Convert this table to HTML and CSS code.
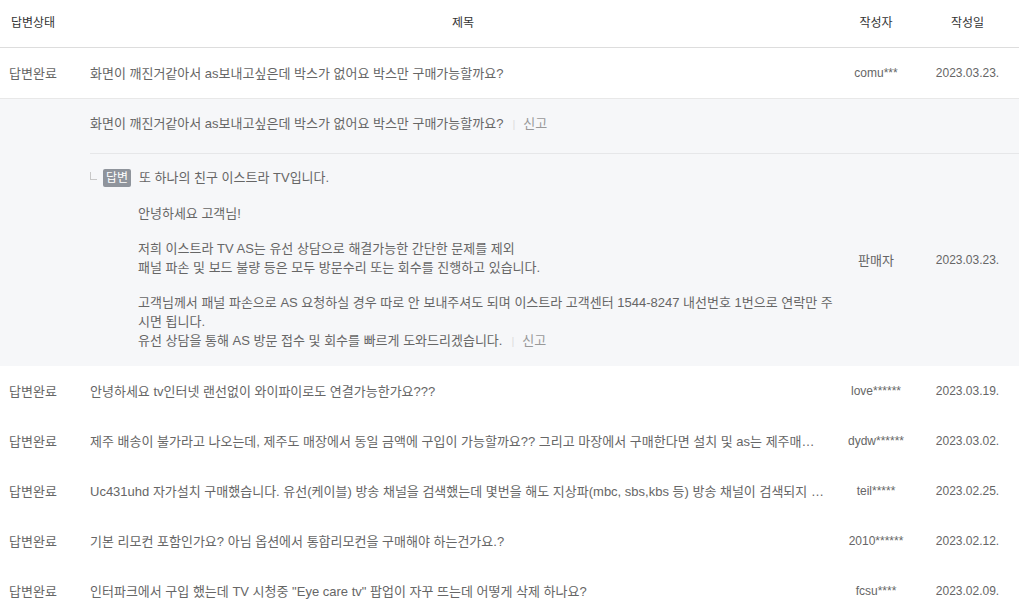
FILE: index.html
```html
<!DOCTYPE html>
<html lang="ko">
<head>
    <meta charset="UTF-8">
    <meta name="viewport" content="width=device-width, initial-scale=1.0">
    <title>상품 Q&amp;A</title>
    <link rel="stylesheet" href="styles.css">
</head>
<body>

<div class="board">
    <!-- 헤더 -->
    <div class="row head">
        <div class="cell">답변상태</div>
        <div class="cell title-head">제목</div>
        <div class="cell">작성자</div>
        <div class="cell">작성일</div>
    </div>

    <!-- 펼쳐진 글 -->
    <div class="row item open">
        <div class="cell">답변완료</div>
        <div class="cell title">화면이 깨진거같아서 as보내고싶은데 박스가 없어요 박스만 구매가능할까요?</div>
        <div class="cell en">comu***</div>
        <div class="cell en">2023.03.23.</div>
    </div>
    <div class="detail">
        <div class="question">
            화면이 깨진거같아서 as보내고싶은데 박스가 없어요 박스만 구매가능할까요?<span class="bar">|</span><span class="report">신고</span>
        </div>
        <div class="row answer-row">
            <div class="cell"></div>
            <div class="cell answer">
                <div class="answer-title">
                    <span class="corner"></span><span class="badge">답변</span>또 하나의 친구 이스트라 TV입니다.
                </div>
                <div class="answer-body">
                    <p>안녕하세요 고객님!</p>
                    <p>저희 이스트라 TV AS는 유선 상담으로 해결가능한 간단한 문제를 제외<br>패널 파손 및 보드 불량 등은 모두 방문수리 또는 회수를 진행하고 있습니다.</p>
                    <p>고객님께서 패널 파손으로 AS 요청하실 경우 따로 안 보내주셔도 되며 이스트라 고객센터 1544-8247 내선번호 1번으로 연락만 주시면 됩니다.<br>유선 상담을 통해 AS 방문 접수 및 회수를 빠르게 도와드리겠습니다.<span class="bar">|</span><span class="report">신고</span></p>
                </div>
            </div>
            <div class="cell">판매자</div>
            <div class="cell en">2023.03.23.</div>
        </div>
    </div>

    <!-- 목록 -->
    <div class="row item">
        <div class="cell">답변완료</div>
        <div class="cell title">안녕하세요 tv인터넷 랜선없이 와이파이로도 연결가능한가요???</div>
        <div class="cell en">love******</div>
        <div class="cell en">2023.03.19.</div>
    </div>
    <div class="row item">
        <div class="cell">답변완료</div>
        <div class="cell title">제주 배송이 불가라고 나오는데, 제주도 매장에서 동일 금액에 구입이 가능할까요?? 그리고 마장에서 구매한다면 설치 및 as는 제주매장에서 가능한가요?</div>
        <div class="cell en">dydw******</div>
        <div class="cell en">2023.03.02.</div>
    </div>
    <div class="row item">
        <div class="cell">답변완료</div>
        <div class="cell title">Uc431uhd 자가설치 구매했습니다. 유선(케이블) 방송 채널을 검색했는데 몇번을 해도 지상파(mbc, sbs,kbs 등) 방송 채널이 검색되지 않습니다.</div>
        <div class="cell en">teil*****</div>
        <div class="cell en">2023.02.25.</div>
    </div>
    <div class="row item">
        <div class="cell">답변완료</div>
        <div class="cell title">기본 리모컨 포함인가요? 아님 옵션에서 통합리모컨을 구매해야 하는건가요.?</div>
        <div class="cell en">2010******</div>
        <div class="cell en">2023.02.12.</div>
    </div>
    <div class="row item">
        <div class="cell">답변완료</div>
        <div class="cell title">인터파크에서 구입 했는데 TV 시청중 "Eye care tv" 팝업이 자꾸 뜨는데 어떻게 삭제 하나요?</div>
        <div class="cell en">fcsu****</div>
        <div class="cell en">2023.02.09.</div>
    </div>
</div>

</body>
</html>
```

FILE: styles.css
```css
body {
    margin: 0;
    font-family: "Liberation Sans", "Noto Sans CJK KR", sans-serif;
    font-size: 13px;
    color: #666;
    background: #fff;
}
.board {
    width: 1019px;
}
.row {
    display: grid;
    grid-template-columns: 66px 770px 80px 103px;
    align-items: center;
}
.cell {
    text-align: center;
    line-height: 19px;
}
.en {
    font-size: 12px;
}
.head {
    height: 47px;
    border-bottom: 1px solid #ddd;
    font-size: 12px;
    color: #333;
}
.head .title-head {
    padding-left: 24px;
}
.item {
    height: 50px;
}
.item.open {
    border-bottom: 1px solid #e8e8e8;
}
.title {
    text-align: left;
    padding-left: 24px;
    padding-right: 10px;
    white-space: nowrap;
    overflow: hidden;
    text-overflow: ellipsis;
}
.detail {
    background: #f6f7f9;
}
.question {
    margin-left: 90px;
    padding: 15px 0 19px;
    line-height: 19px;
    border-bottom: 1px solid #e6e7e9;
}
.bar {
    color: #ddd;
    margin: 0 8px 0 9px;
    font-size: 11px;
}
.report {
    color: #999;
}
.answer {
    text-align: left;
    padding: 14px 0 15px 24px;
}
.answer-title {
    display: flex;
    align-items: center;
}
.corner {
    width: 6px;
    height: 7px;
    margin: 0 6px 4px 0;
    border-left: 1px solid #c8c8c8;
    border-bottom: 1px solid #c8c8c8;
}
.badge {
    display: inline-block;
    width: 28px;
    height: 18px;
    margin: 0 8px 0 0;
    line-height: 18px;
    text-align: center;
    font-size: 12px;
    color: #fff;
    background: #8f949c;
    border-radius: 2px;
}
.answer-body {
    padding-left: 48px;
}
.answer-body p {
    margin: 16px 0 0;
}
.answer-body p:first-child {
    margin-top: 17px;
}
```
